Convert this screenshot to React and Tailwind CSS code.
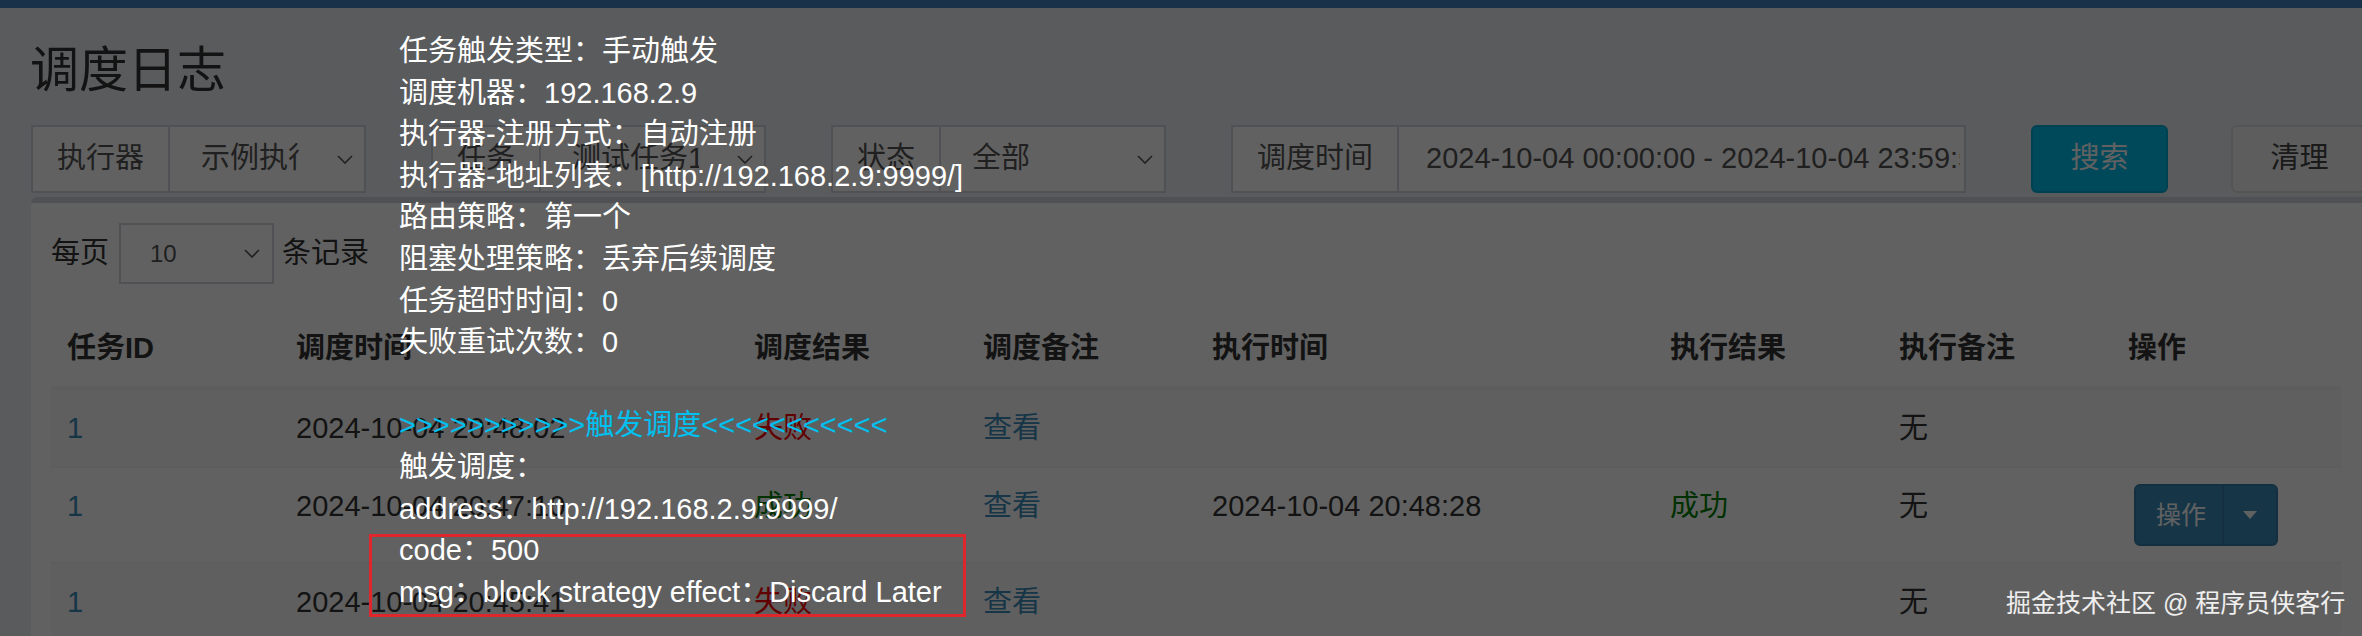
import React from 'react';

function Chevron() {
  return (
    <svg width="16" height="9" viewBox="0 0 16 9" className="shrink-0">
      <path d="M1 1l7 7 7-7" fill="none" stroke="#555" strokeWidth="1.6" />
    </svg>
  );
}

function SelectGroup({ label, value, wide }) {
  return (
    <div className={wide ? 'w-[800px] pl-[31px] pr-[34px]' : 'w-[400px] pl-[31px] pr-[34px]'}>
      <div className="flex h-[68px] text-[29px] text-[#555]">
        <div className="flex items-center px-[24px] border-2 border-[#d2d6de] bg-white whitespace-nowrap">{label}</div>
        <div className={wide
          ? 'flex-1 min-w-0 flex items-center border-2 border-l-0 border-[#d2d6de] bg-white pl-[27px] pr-[4px]'
          : 'flex-1 min-w-0 flex items-center border-2 border-l-0 border-[#d2d6de] bg-white pl-[31px] pr-[11px]'}>
          <span className="flex-1 min-w-0 overflow-hidden whitespace-nowrap">{value}</span>
          {!wide && <span className="ml-[38px]"><Chevron /></span>}
        </div>
      </div>
    </div>
  );
}

const rows = [
  { time: '2024-10-04 20:48:02', ok: false, runTime: '', runOk: null, op: false },
  { time: '2024-10-04 20:47:10', ok: true, runTime: '2024-10-04 20:48:28', runOk: true, op: true },
  { time: '2024-10-04 20:45:41', ok: false, runTime: '', runOk: null, op: false },
];

const tipLines = [
  '任务触发类型：手动触发',
  '调度机器：192.168.2.9',
  '执行器-注册方式：自动注册',
  '执行器-地址列表：[http://192.168.2.9:9999/]',
  '路由策略：第一个',
  '阻塞处理策略：丢弃后续调度',
  '任务超时时间：0',
  '失败重试次数：0',
];

export default function App() {
  const th = 'px-[16px] py-[16px] leading-[44px] text-left font-bold text-[#333] border-b-4 border-[#f4f4f4] whitespace-nowrap';
  const td = 'px-[16px] py-[16px] leading-[44px] align-top border-b-2 border-[#f4f4f4] whitespace-nowrap';

  return (
    <div className="relative w-[2362px] h-[636px] overflow-hidden bg-[#ecf0f5] font-['Liberation_Sans','Noto_Sans_CJK_SC',sans-serif] text-[#333]">
      <div className="h-[8px] bg-[#4481c2]" />

      <h1 className="pl-[30px] pt-[34px] text-[49px] leading-[56px] font-normal">调度日志</h1>

      {/* Filters */}
      <div className="mt-[27px] flex w-[2400px]">
        <SelectGroup label="执行器" value="示例执行器" />
        <SelectGroup label="任务" value="测试任务1" />
        <SelectGroup label="状态" value="全部" />
        <SelectGroup label="调度时间" value="2024-10-04 00:00:00 - 2024-10-04 23:59:59" wide />
        <div className="w-[200px] pl-[31px] pr-[32px]">
          <div className="h-[68px] flex items-center justify-center rounded-[6px] bg-[#00c0ef] border-2 border-[#00acd6] text-white text-[29px]">搜索</div>
        </div>
        <div className="w-[200px] pl-[31px] pr-[32px]">
          <div className="h-[68px] flex items-center justify-center rounded-[6px] bg-[#f4f4f4] border-2 border-[#ddd] text-[#444] text-[29px]">清理</div>
        </div>
      </div>

      {/* Log table box */}
      <div className="mt-[4px] ml-[31px] w-[2340px] rounded-[6px] border-t-[6px] border-[#d2d6de] bg-white px-[20px] pt-[20px] pb-[40px]">
        <div className="flex items-center h-[61px] text-[29px]">
          <span>每页</span>
          <div className="ml-[10px] w-[155px] h-[61px] flex items-center border-2 border-[#d2d6de] pl-[29px] pr-[12px] text-[24px] text-[#555]">
            <span className="flex-1">10</span>
            <Chevron />
          </div>
          <span className="ml-[8px]">条记录</span>
        </div>

        <table className="mt-[26px] table-fixed w-[2290px] border-separate border-spacing-0 text-[29px]">
          <colgroup>
            <col className="w-[229px]" />
            <col className="w-[458px]" />
            <col className="w-[229px]" />
            <col className="w-[229px]" />
            <col className="w-[458px]" />
            <col className="w-[229px]" />
            <col className="w-[229px]" />
            <col className="w-[229px]" />
          </colgroup>
          <thead>
            <tr>
              <th className={th}>任务ID</th>
              <th className={th}>调度时间</th>
              <th className={th}>调度结果</th>
              <th className={th}>调度备注</th>
              <th className={th}>执行时间</th>
              <th className={th}>执行结果</th>
              <th className={th}>执行备注</th>
              <th className={th}>操作</th>
            </tr>
          </thead>
          <tbody>
            {rows.map((r, i) => (
              <tr key={i} className={i % 2 === 0 ? 'bg-[#f9f9f9]' : 'bg-white'}>
                <td className={td + ' text-[#3c8dbc]'}>1</td>
                <td className={td}>{r.time}</td>
                <td className={td}>
                  {r.ok ? <span className="text-[#008000]">成功</span> : <span className="text-[#ff0000]">失败</span>}
                </td>
                <td className={td + ' text-[#3c8dbc]'}>查看</td>
                <td className={td}>{r.runTime}</td>
                <td className={td}>{r.runOk && <span className="text-[#008000]">成功</span>}</td>
                <td className={td}>无</td>
                <td className={td}>
                  {r.op && (
                    <div className="ml-[6px] inline-flex h-[62px] text-[25px] text-white">
                      <div className="flex items-center pl-[20px] pr-[16px] bg-[#3c8dbc] border-2 border-[#367fa9] rounded-l-[6px]">操作</div>
                      <div className="flex items-center justify-center w-[54px] bg-[#3c8dbc] border-2 border-l-0 border-[#367fa9] rounded-r-[6px]">
                        <span className="block w-0 h-0 border-x-[7px] border-t-[8px] border-x-transparent border-t-white" />
                      </div>
                    </div>
                  )}
                </td>
              </tr>
            ))}
          </tbody>
        </table>
      </div>

      {/* Modal shade */}
      <div className="absolute inset-0 bg-[rgba(0,0,0,0.62)]" />

      {/* Trigger message tip */}
      <div className="absolute left-[399px] top-[31px] text-white text-[29px]">
        {tipLines.map((t) => (
          <div key={t} className="h-[41.6px] leading-[41.6px] whitespace-nowrap">{t}</div>
        ))}
        <div className="h-[41.6px]" />
        <div className="h-[41.6px] leading-[41.6px] whitespace-nowrap text-[#00c0ef]">{'>>>>>>>>>>>触发调度<<<<<<<<<<<'}</div>
        <div className="h-[41.6px] leading-[41.6px] whitespace-nowrap">触发调度：</div>
        <div className="h-[41.6px] leading-[41.6px] whitespace-nowrap">address：http://192.168.2.9:9999/</div>
        <div className="h-[41.6px] leading-[41.6px] whitespace-nowrap">code：500</div>
        <div className="h-[41.6px] leading-[41.6px] whitespace-nowrap">msg：block strategy effect：Discard Later</div>
      </div>

      {/* Highlight box */}
      <div className="absolute left-[369px] top-[534px] w-[597px] h-[83px] border-[3px] border-[#e0262d]" />

      {/* Watermark */}
      <div className="absolute left-[2006px] top-[585px] text-[25px] leading-[36px] text-white/90 whitespace-nowrap">
        掘金技术社区 @ 程序员侠客行
      </div>
    </div>
  );
}
